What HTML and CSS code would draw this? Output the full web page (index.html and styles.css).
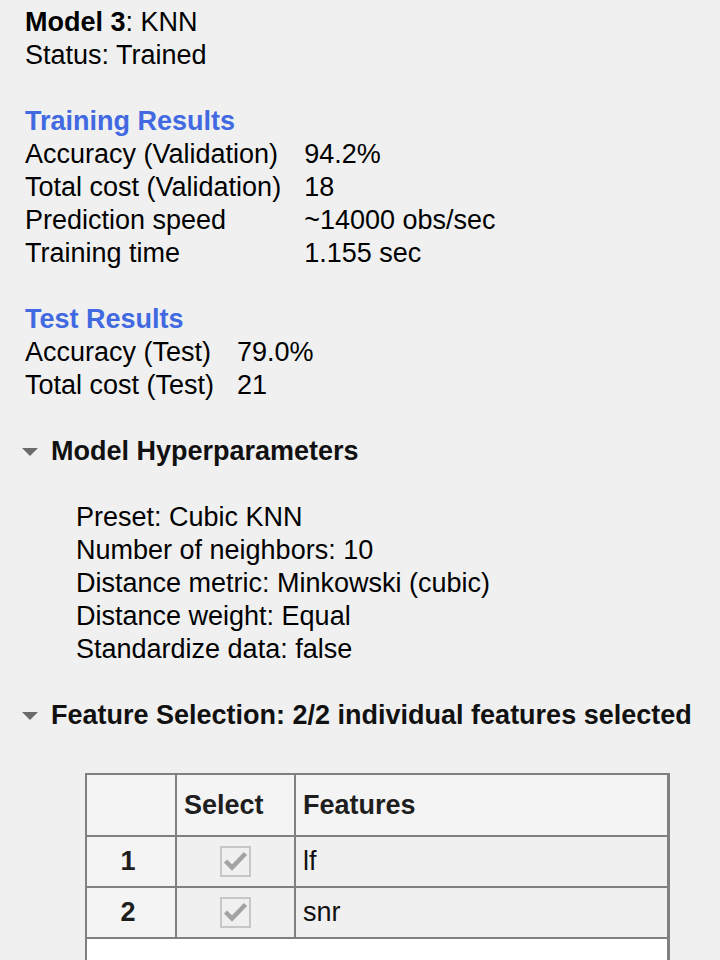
FILE: index.html
```html
<!DOCTYPE html>
<html>
<head>
<meta charset="utf-8">
<link rel="stylesheet" href="styles.css">
</head>
<body>
<div class="page">
  <div class="line"><b>Model 3</b>: KNN</div>
  <div class="line">Status: Trained</div>

  <div class="section">
    <div class="line heading">Training Results</div>
    <div class="kv">
      <span>Accuracy (Validation)</span><span>94.2%</span>
      <span>Total cost (Validation)</span><span>18</span>
      <span>Prediction speed</span><span>~14000 obs/sec</span>
      <span>Training time</span><span>1.155 sec</span>
    </div>
  </div>

  <div class="section">
    <div class="line heading">Test Results</div>
    <div class="kv">
      <span>Accuracy (Test)</span><span>79.0%</span>
      <span>Total cost (Test)</span><span>21</span>
    </div>
  </div>

  <div class="section">
    <div class="line toggle"><span class="tri"></span><b>Model Hyperparameters</b></div>
    <div class="params">
      <div class="line">Preset: Cubic KNN</div>
      <div class="line">Number of neighbors: 10</div>
      <div class="line">Distance metric: Minkowski (cubic)</div>
      <div class="line">Distance weight: Equal</div>
      <div class="line">Standardize data: false</div>
    </div>
  </div>

  <div class="section">
    <div class="line toggle"><span class="tri"></span><b>Feature Selection: 2/2 individual features selected</b></div>
  </div>

  <div class="tablewrap">
    <table class="features">
      <thead>
        <tr>
          <th class="rowhead"></th>
          <th class="sel">Select</th>
          <th class="feat">Features</th>
        </tr>
      </thead>
      <tbody>
        <tr>
          <td class="rowhead">1</td>
          <td class="sel"><span class="check"><svg width="27" height="27" viewBox="0 0 27 27"><path d="M3.5 13 L10 19.5 L23.5 5.5" fill="none" stroke="#a3a3a3" stroke-width="4.5" stroke-linejoin="miter"/></svg></span></td>
          <td class="feat">lf</td>
        </tr>
        <tr>
          <td class="rowhead">2</td>
          <td class="sel"><span class="check"><svg width="27" height="27" viewBox="0 0 27 27"><path d="M3.5 13 L10 19.5 L23.5 5.5" fill="none" stroke="#a3a3a3" stroke-width="4.5" stroke-linejoin="miter"/></svg></span></td>
          <td class="feat">snr</td>
        </tr>
        <tr class="empty">
          <td colspan="3"></td>
        </tr>
      </tbody>
    </table>
  </div>
</div>
</body>
</html>
```
FILE: styles.css
```css
html, body {
  margin: 0;
  padding: 0;
  background: #f0f0f0;
}
body {
  font-family: "Liberation Sans", Arial, sans-serif;
  font-size: 27px;
  line-height: 33px;
  color: #000;
  overflow: hidden;
}
.page {
  padding: 6px 0 0 25px;
}
.line {
  height: 33px;
  white-space: nowrap;
}
.section {
  margin-top: 33px;
}
.heading {
  color: #4169e1;
  font-weight: bold;
}
.kv {
  display: grid;
  grid-template-columns: max-content max-content;
  column-gap: 23px;
  white-space: nowrap;
}
.toggle {
  display: flex;
  align-items: center;
  margin-left: -3px;
}
.toggle b {
  color: #111;
}
.tri {
  width: 0;
  height: 0;
  border-left: 8px solid transparent;
  border-right: 8px solid transparent;
  border-top: 8px solid #6b6b6b;
  margin-right: 13px;
  margin-top: 1px;
}
.params {
  margin-top: 33px;
  padding-left: 51px;
}
.tablewrap {
  margin-top: 41px;
  padding-left: 60px;
}
.features {
  border-collapse: collapse;
  width: 585px;
  border: 2px solid #808080;
  border-right-width: 3px;
  font-size: 27px;
  color: #1e1e1e;
}
.features th, .features td {
  border: 2px solid #808080;
  padding: 0;
  text-align: left;
}
.features thead th {
  background: #f4f4f4;
  height: 60px;
  font-weight: bold;
  padding-left: 7px;
}
.features thead th.rowhead {
  padding-left: 0;
}
.features tbody td {
  height: 49px;
  background: #f0f0f0;
}
.features .rowhead {
  width: 82px;
}
.features .sel {
  width: 110px;
}
.features tbody td.rowhead {
  background: #f4f4f4;
  font-weight: bold;
  text-align: center;
  padding-right: 6px;
}
.features tbody td.sel {
  text-align: center;
}
.features tbody td.feat {
  padding-left: 7px;
  color: #111;
}
.check {
  display: inline-flex;
  width: 27px;
  height: 27px;
  border: 2px solid #c6c6c6;
  background: #f0f0f0;
  vertical-align: middle;
  align-items: center;
  justify-content: center;
  margin-top: -2px;
}
.check svg {
  width: 27px;
  height: 27px;
}
.features tr.empty td {
  background: #fff;
  height: 60px;
  border-bottom: none;
}
```
